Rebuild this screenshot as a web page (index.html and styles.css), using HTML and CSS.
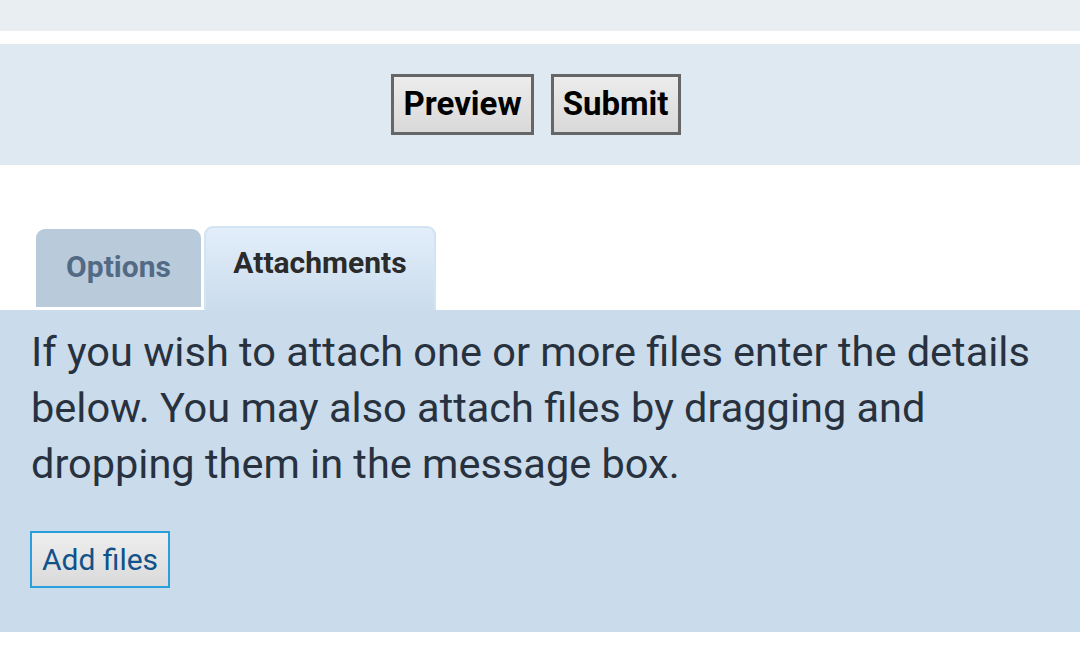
FILE: index.html
```html
<!DOCTYPE html>
<html>
<head>
<meta charset="utf-8">
<link rel="stylesheet" href="styles.css">
</head>
<body>
<div class="topband"></div>
<div class="actions">
  <button class="btn">Preview</button>
  <button class="btn">Submit</button>
</div>
<div class="tabs">
  <div class="tab">Options</div>
  <div class="tab active">Attachments</div>
</div>
<div class="panel">
  <p class="info">If you wish to attach one or more files enter the details below. You may also attach files by dragging and dropping them in the message box.</p>
  <button class="addfiles">Add files</button>
</div>
</body>
</html>
```
FILE: styles.css
```css
html, body {
  margin: 0;
  padding: 0;
  background: #ffffff;
  font-family: Roboto, "Liberation Sans", sans-serif;
}
.topband {
  height: 31px;
  background: #e9eef2;
  margin-bottom: 13px;
}
.actions {
  height: 121px;
  background: #dfe9f1;
  display: flex;
  justify-content: center;
  align-items: center;
  gap: 17px;
  padding-right: 8px;
  box-sizing: border-box;
}
.btn {
  height: 61px;
  border: 3px solid #666666;
  background: linear-gradient(#ececec, #d9d9d9);
  font-family: Roboto, "Liberation Sans", sans-serif;
  font-weight: bold;
  font-size: 33px;
  color: #000;
  padding: 0 9px 2px;
  margin: 0;
  border-radius: 0;
}
.tabs {
  display: flex;
  align-items: flex-end;
  gap: 3px;
  padding-left: 36px;
  margin-top: 61px;
  height: 84px;
}
.tab {
  width: 165px;
  height: 78px;
  margin-bottom: 3px;
  background: #b9cadb;
  border-radius: 9px 9px 0 0;
  display: flex;
  align-items: center;
  justify-content: center;
  box-sizing: border-box;
  padding-bottom: 4px;
  font-weight: bold;
  font-size: 30px;
  color: #536a85;
}
.tab.active {
  width: 232px;
  height: 84px;
  margin-bottom: 0;
  background: linear-gradient(#e2eefa, #cbdcec);
  border: 2px solid #d3e3f1;
  border-bottom: none;
  color: #2b2b2b;
  padding-bottom: 14px;
}
.panel {
  background: #cadbeb;
  padding: 14px 30px 44px 31px;
}
.info {
  margin: 0 0 39px 0;
  font-size: 41.5px;
  line-height: 56px;
  color: #28313e;
}
.addfiles {
  height: 57px;
  width: 140px;
  margin: 0;
  margin-left: -1px;
  border: 2px solid #29a0db;
  background: linear-gradient(#eeeeee, #dadada);
  font-family: Roboto, "Liberation Sans", sans-serif;
  font-size: 30px;
  color: #105289;
  padding: 0;
  border-radius: 0;
}
```
